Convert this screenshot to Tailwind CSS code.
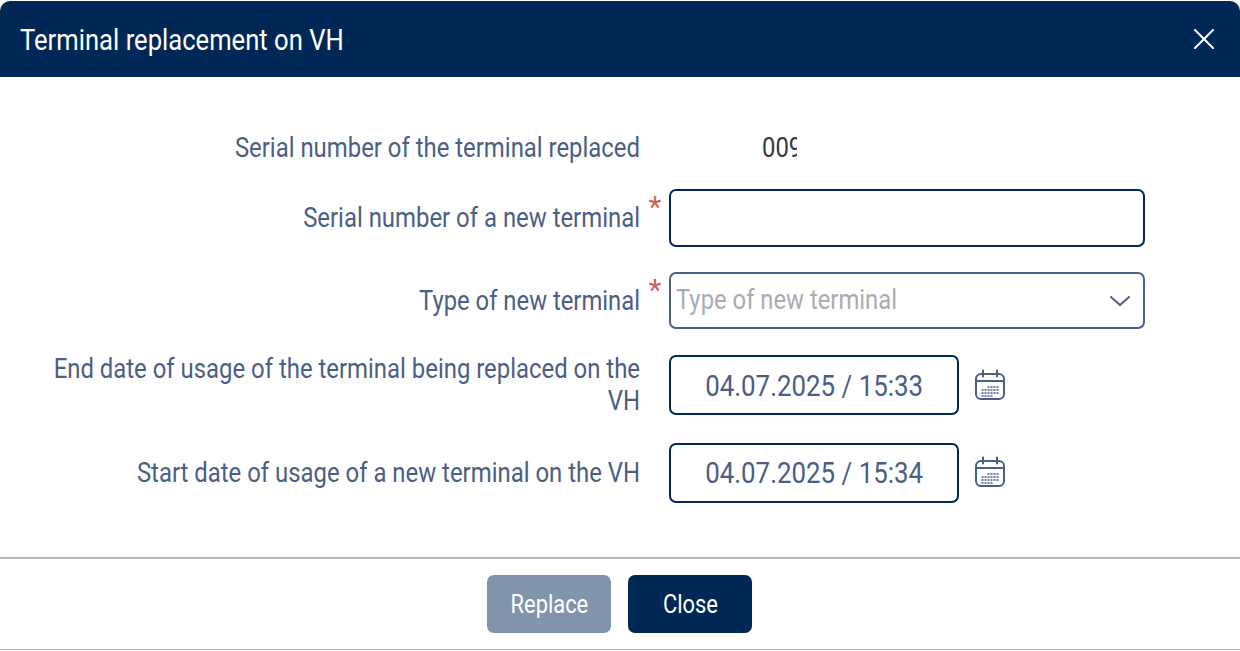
<!DOCTYPE html>
<html lang="en">
<head>
    <meta charset="UTF-8">
    <title>Terminal replacement on VH</title>
    <script src="https://cdn.jsdelivr.net/npm/@tailwindcss/browser@4"></script>
</head>
<body class="bg-white font-['Roboto',sans-serif] overflow-hidden">
    <div class="w-[1240px] h-[651px] pt-px flex flex-col bg-white">
        <div class="h-[76px] bg-[#002856] rounded-t-[10px] flex items-center justify-between pl-5 pr-[26px]">
            <h1 class="text-white text-[29px] leading-none pt-[3px] scale-x-[0.883] origin-left">Terminal replacement on VH</h1>
            <svg class="w-[20px] h-[20px]" viewBox="0 0 20 20" fill="none" stroke="white" stroke-width="2" stroke-linecap="round"><path d="M1 1l18 18M19 1L1 19"/></svg>
        </div>

        <div class="h-[480px] pt-[54px] text-[27px] text-[#4b5e85]">
            <div class="flex items-center h-[34px]">
                <div class="w-[680px] -ml-[40px] text-right leading-[32px] scale-x-[0.885] origin-right">Serial number of the terminal replaced</div>
                <div class="ml-[120px] w-[37px] pl-[2px] overflow-hidden whitespace-nowrap text-[#333a45] leading-[32px]"><span class="inline-block scale-x-[0.885] origin-left">009</span></div>
            </div>
            <div class="flex items-center mt-[24px] h-[58px]">
                <div class="w-[680px] -ml-[40px] text-right leading-[32px] scale-x-[0.885] origin-right">Serial number of a new terminal</div>
                <span class="w-[29px] self-start text-center text-[30px] leading-[34px] pt-px pl-px text-[#d0615f]">*</span>
                <input class="w-[476px] h-[58px] border-2 border-[#002856] rounded-[7px] outline-none">
            </div>
            <div class="flex items-center mt-[25px] h-[57px]">
                <div class="w-[680px] -ml-[40px] text-right leading-[32px] scale-x-[0.882] origin-right">Type of new terminal</div>
                <span class="w-[29px] self-start text-center text-[30px] leading-[34px] pt-px pl-px text-[#d0615f]">*</span>
                <div class="w-[476px] h-[57px] border-2 border-[#4b5e85] rounded-[7px] flex items-center justify-between pl-[5px] pr-[12px]">
                    <span class="text-[#a9acb2] scale-x-[0.882] origin-left">Type of new terminal</span>
                    <svg class="w-[22px] h-[12px]" viewBox="0 0 22 12" fill="none" stroke="#4b5e85" stroke-width="2" stroke-linecap="round" stroke-linejoin="round"><path d="M2 2l9 8 9-8"/></svg>
                </div>
            </div>
            <div class="flex items-center mt-[26px] h-[60px]">
                <div class="w-[680px] -ml-[40px] text-right leading-[32px] scale-x-[0.885] origin-right">End date of usage of the terminal being replaced on the VH</div>
                <div class="ml-[29px] w-[290px] h-[60px] border-2 border-[#002856] rounded-[7px] flex items-center justify-center text-[29px] pt-[4px]"><span class="scale-x-[0.892]">04.07.2025 / 15:33</span></div>
                <svg class="ml-[15px] w-[32px] h-[32px]" viewBox="0 0 32 32" fill="none" stroke="#4b5e85" stroke-width="2" stroke-linecap="round"><rect x="2" y="5" width="28" height="25" rx="5"/><path d="M9 1.500v6M23 1.500v6M2 12h28"/><path d="M8 24h1M11 24h1M14 24h1M17 24h1M20 24h1M23 24h1M8 21h1M11 21h1M14 21h1M17 21h1M20 21h1M23 21h1M14 18h1M17 18h1M20 18h1M23 18h1M8 27h1M11 27h1M14 27h1M17 27h1" stroke-width="1.500"/></svg>
            </div>
            <div class="flex items-center mt-[28px] h-[60px]">
                <div class="w-[680px] -ml-[40px] text-right leading-[32px] scale-x-[0.885] origin-right">Start date of usage of a new terminal on the VH</div>
                <div class="ml-[29px] w-[290px] h-[60px] border-2 border-[#002856] rounded-[7px] flex items-center justify-center text-[29px] pt-[2px]"><span class="scale-x-[0.892]">04.07.2025 / 15:34</span></div>
                <svg class="ml-[15px] -mt-[2px] w-[32px] h-[32px]" viewBox="0 0 32 32" fill="none" stroke="#4b5e85" stroke-width="2" stroke-linecap="round"><rect x="2" y="5" width="28" height="25" rx="5"/><path d="M9 1.500v6M23 1.500v6M2 12h28"/><path d="M8 24h1M11 24h1M14 24h1M17 24h1M20 24h1M23 24h1M8 21h1M11 21h1M14 21h1M17 21h1M20 21h1M23 21h1M14 18h1M17 18h1M20 18h1M23 18h1M8 27h1M11 27h1M14 27h1M17 27h1" stroke-width="1.500"/></svg>
            </div>
        </div>

        <div class="h-[93px] border-t-2 border-b border-[#b5b5b5] flex justify-center gap-[17px] pt-[16px] pr-[2px]">
            <button class="w-[124px] h-[58px] bg-[#8095ab] text-white rounded-[7px] text-[25px] pt-[2px] pl-[2px]"><span class="inline-block scale-x-[0.875]">Replace</span></button>
            <button class="w-[124px] h-[58px] bg-[#002856] text-white rounded-[7px] text-[25px] pt-[2px] pl-[2px]"><span class="inline-block scale-x-[0.875]">Close</span></button>
        </div>
    </div>
</body>
</html>
